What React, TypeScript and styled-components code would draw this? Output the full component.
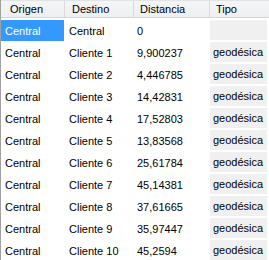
import React from "react";
import styled, { createGlobalStyle } from "styled-components";

const Global = createGlobalStyle`
  html, body { margin: 0; padding: 0; background: #ffffff; }
  body { font-family: "Liberation Sans", Arial, sans-serif; }
`;

const cols = "64px 69px 76px 1fr";

const Grid = styled.div`
  width: 269px;
  height: 260px;
  overflow: hidden;
  box-sizing: border-box;
  border-left: 1px solid #a0a0a0;
  background: #ffffff;
  font-family: "Liberation Sans", Arial, sans-serif;
  font-size: 11px;
  color: #000000;
`;

const HeaderRow = styled.div`
  display: grid;
  grid-template-columns: ${cols};
  height: 18px;
  box-sizing: border-box;
  border-top: 1px solid #e2e3e5;
  border-bottom: 1px solid #d5d5d5;
  background: linear-gradient(#f4f5f6, #eeeff1);
  margin-bottom: 2px;
`;

const HeaderCell = styled.div<{ $pad: number }>`
  display: flex;
  align-items: center;
  padding-left: ${(p) => p.$pad}px;
  border-right: 1px solid #d9dade;
  white-space: nowrap;
  overflow: hidden;
  &:last-child { border-right: none; }
`;

const Row = styled.div`
  display: grid;
  grid-template-columns: ${cols};
  height: 22px;
`;

const Cell = styled.div<{ $pad: number; $selected?: boolean }>`
  display: flex;
  align-items: center;
  height: 21px;
  box-sizing: border-box;
  padding-left: ${(p) => p.$pad}px;
  margin-right: 1px;
  white-space: nowrap;
  overflow: hidden;
  background: ${(p) => (p.$selected ? "#3399ff" : "transparent")};
  color: ${(p) => (p.$selected ? "#ffffff" : "#000000")};
`;

const ComboCell = styled.div<{ $pad: number }>`
  display: flex;
  align-items: center;
  height: 20px;
  margin-right: 2px;
  padding-left: ${(p) => p.$pad}px;
  background: #f0f0f0;
  white-space: nowrap;
  overflow: hidden;
`;

const headers = [
  { label: "Origen", pad: 9 },
  { label: "Destino", pad: 7 },
  { label: "Distancia", pad: 6 },
  { label: "Tipo", pad: 6 },
];

const rows: [string, string, string, string][] = [
  ["Central", "Central", "0", ""],
  ["Central", "Cliente 1", "9,900237", "geodésica"],
  ["Central", "Cliente 2", "4,446785", "geodésica"],
  ["Central", "Cliente 3", "14,42831", "geodésica"],
  ["Central", "Cliente 4", "17,52803", "geodésica"],
  ["Central", "Cliente 5", "13,83568", "geodésica"],
  ["Central", "Cliente 6", "25,61784", "geodésica"],
  ["Central", "Cliente 7", "45,14381", "geodésica"],
  ["Central", "Cliente 8", "37,61665", "geodésica"],
  ["Central", "Cliente 9", "35,97447", "geodésica"],
  ["Central", "Cliente 10", "45,2594", "geodésica"],
];

export default function App() {
  return (
    <>
      <Global />
      <Grid>
        <HeaderRow>
          {headers.map((h) => (
            <HeaderCell key={h.label} $pad={h.pad}>
              {h.label}
            </HeaderCell>
          ))}
        </HeaderRow>
        {rows.map((r, i) => (
          <Row key={i}>
            <Cell $pad={4} $selected={i === 0}>{r[0]}</Cell>
            <Cell $pad={4}>{r[1]}</Cell>
            <Cell $pad={3}>{r[2]}</Cell>
            <ComboCell $pad={3}>{r[3]}</ComboCell>
          </Row>
        ))}
      </Grid>
    </>
  );
}
